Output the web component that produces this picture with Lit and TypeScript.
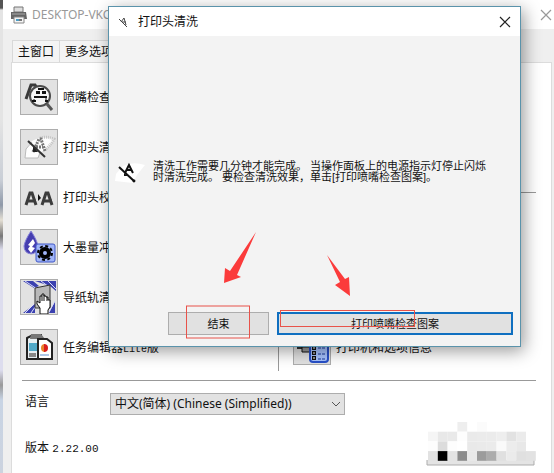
import { LitElement, html, svg, css } from "lit";
import { customElement } from "lit/decorators.js";

const nozzleCheck = svg`
  <path d="M5 19 L10 5 L14 5 L16 8" fill="none" stroke="#3a3a3a" stroke-width="3"/>
  <circle cx="19" cy="16" r="10" fill="#f4f4f4" stroke="#4a4a4a" stroke-width="2"/>
  <path d="M26 24 L31 30" stroke="#555" stroke-width="3"/>
  <path d="M17 8h6v2h-6zM15 11h4v3h-4zM21 11h4v3h-4zM13 16h13v2H13zM11 20h4v2h-4zM24 20h3v2h-3z" fill="#111"/>
  <path d="M13 19v3M25 18v4" stroke="#111"/>`;

const headClean = svg`
  <path d="M4 28 L5 19 L11 11 Q21 5 33 9 Q30 15 24 20 L18 23 L17 28 Z" fill="#fdfdfd"/>
  <path d="M4 28 L5 19 L11 12 M4 28h13l2-5" fill="none" stroke="#bbb"/>
  <path d="M19 8 Q26 6 33 9 Q31 14 25 19" fill="none" stroke="#c4c4c4" stroke-width="3" stroke-dasharray="1 1"/>
  <path d="M12 22 L18 9 L20 9 L24 21 M15 17h7" fill="none" stroke="#777" stroke-width="3" stroke-dasharray="2 1"/>
  <path d="M12 15 L17 22 L12 22Z" fill="#222"/>
  <path d="M7 11 L24 27" stroke="#333" stroke-width="2"/>`;

const headAlign = svg`
  <path d="M5 25 L9 13 H11 L15 25 M6 21h9 M21 25 L25 13 H27 L31 25 M22 21h9" fill="none" stroke="#3c3c3c" stroke-width="3"/>
  <path d="M17 14v7l3-3z" fill="#111"/>`;

const inkFlush = svg`
  <path d="M10 1 Q16 10 17 16 Q16 24 10 24 Q3 23 3 16 Q4 10 10 1Z" fill="#463eb0" stroke="#8783d8"/>
  <path d="M12 9l2 4-3 4 3 1-4 5-3-4 2-3-2-1z" fill="#fff"/>
  <rect x="15" y="14" width="19" height="18" rx="2" fill="#a0b4f8" stroke="#4058c8"/>
  <circle cx="24" cy="23" r="4" fill="none" stroke="#000" stroke-width="4"/>
  <circle cx="24" cy="23" r="7" fill="none" stroke="#000" stroke-width="2" stroke-dasharray="3 2.500"/>`;

const paperPath = svg`
  <path d="M2 1h10l6 5-5 2zM14 1h21v10l-6-5zM2 33l12-9v9zM28 33l6-12v12z" fill="#3b41b0"/>
  <path d="M4 1l12 8M20 1l8 6M27 1l8 8M4 33l9-9M10 33l4-6M28 32l6-11" stroke="#d9dcfa"/>
  <path d="M14 8 L29 5 V28 H14Z" fill="#b9b9b9" stroke="#333"/>
  <path d="M19 34v-6l-3-4v-3l3 2v-7h2v-2h2v2h2v1h2v3h2v7l-2 3v4z" fill="#fff" stroke="#111"/>
  <path d="M21 16v5M23 15v6M26 17v4" stroke="#111"/>`;

const jobEditor = svg`
  <path d="M6 8l6-3h8v24H6z" fill="#e6eef2" stroke="#222" stroke-width="2"/>
  <path d="M10 4h10l4 5H9z" fill="#777"/>
  <path d="M8 13h8v8H8z" fill="#4fa8c8"/><path d="M8 23h7v4H8z" fill="#888"/>
  <path d="M17 9h9l5 4v16H17z" fill="#fff" stroke="#222" stroke-width="2"/>
  <path d="M24 14a4 4 0 1 0 0 8z" fill="#e9842c"/><path d="M23 14a4 4 0 0 1 0 8z" fill="#d81e1e"/>
  <path d="M19 25h9" stroke="#5a8fd0"/>`;

const printerInfo = svg`
  <path d="M3 14h14v5H3z" fill="#333"/><path d="M8 17h9v5H8z" fill="#999" stroke="#111"/>
  <rect x="16" y="8" width="18" height="24" rx="3" fill="#a8c4ff" stroke="#2850c8" stroke-width="2"/>
  <path d="M18 13h4M18 18h4M18 23h4M18 28h4" stroke="#111" stroke-width="4"/>
  <path d="M19 18h2M19 23h2M19 28h2" stroke="#fff"/>
  <path d="M24 13h8M24 18h8M24 24h8M24 29h8" stroke="#1a3b9c" stroke-dasharray="3 1"/>`;

const TASKS = [
  { icon: nozzleCheck, name: "喷嘴检查", latin: "", tail: "" },
  { icon: headClean, name: "打印头清洗", latin: "", tail: "" },
  { icon: headAlign, name: "打印头校准", latin: "", tail: "" },
  { icon: inkFlush, name: "大墨量冲洗", latin: "", tail: "" },
  { icon: paperPath, name: "导纸轨清洁", latin: "", tail: "" },
  { icon: jobEditor, name: "任务编辑器", latin: "Lite", tail: "版" },
];

/* [column, row, shade] of the mosaic cells over the bottom button */
const CELLS: [number, number, string][] = [
  [3, 0, "#eeeeee"], [5, 0, "#fbfbfb"],
  [0, 1, "#f5f5f5"], [1, 1, "#e8e8e8"], [2, 1, "#e9e9e9"], [3, 1, "#fdfdfd"], [4, 1, "#eaeaea"], [5, 1, "#ebebeb"], [6, 1, "#ebebeb"], [7, 1, "#eeeeee"], [8, 1, "#e2e2e2"], [9, 1, "#ebebeb"],
  [0, 2, "#fdfdfd"], [1, 2, "#dcdcdc"], [2, 2, "#fdfdfd"], [3, 2, "#ffffff"], [4, 2, "#e9e9e9"], [5, 2, "#eaeaea"], [6, 2, "#ebebeb"], [7, 2, "#fafafa"], [8, 2, "#ececec"], [9, 2, "#e8e8e8"],
  [0, 3, "#e2e2e2"], [1, 3, "#000000"], [2, 3, "#e3e3e3"], [3, 3, "#8c8c8c"], [4, 3, "#e9e9e9"], [5, 3, "#9c9c9c"], [6, 3, "#acacac"], [7, 3, "#e0e0e0"], [8, 3, "#ebebeb"], [9, 3, "#e0e0e0"], [10, 3, "#e2e2e2"],
];

@customElement("app-root")
export class AppRoot extends LitElement {
  static styles = css`
    :host {
      display: block;
      position: relative;
      min-height: 100vh;
      overflow: hidden;
      box-sizing: border-box;
      padding-left: 3px;
      background: linear-gradient(#555 0 8px, #e4e4e4 10px 120px, #c9ced6 180px, #8f99a8 205px, #e4dfd4 220px, #777 236px, #dde 250px 370px, #999 385px, #c8d4e4 400px, #ccd3df);
      font: 12px/16px "Liberation Sans", "Noto Sans CJK SC", sans-serif;
      color: #111;
    }
    button, select { font: inherit; color: inherit; margin: 0; padding: 0; border-radius: 0; }
    svg { display: block; }
    hr { margin: 0; border: 0; border-top: 1px solid #999; }
    .window { display: flex; flex-direction: column; min-height: 100vh; background: #efefef; }
    .bar { display: flex; align-items: center; background: #fff; }
    .main-bar { height: 29px; padding: 0 2px 0 7px; gap: 4px; color: #999; font-family: "Noto Sans", sans-serif; }
    .bar-title { flex: 1; font-weight: 400; font-size: inherit; margin: 0; }
    .close { border: 0; background: none; }
    .tabs { display: flex; margin: 11px 0 0 9px; }
    .tab { height: 22px; padding: 0 5px; border: 1px solid #d9d9d9; border-bottom: 0; background: #f4f4f4; }
    .tab + .tab { border-left: 0; }
    .panel { flex: 1; margin: 0 2px 0 8px; padding: 16px 15px 6px 8px; border: 1px solid #dcdcdc; border-bottom: 0; background: #fff; }
    .columns { display: grid; grid-template-columns: 1fr 1fr; padding-bottom: 9px; }
    .list { display: flex; flex-direction: column; gap: 14px; padding-bottom: 6px; }
    .right { justify-content: space-between; border-left: 1px solid #999; padding-left: 14px; }
    .right hr { margin-top: 113px; }
    .rule { margin-left: 2px; }
    .task { display: flex; align-items: center; gap: 5px; white-space: nowrap; }
    .task > span { padding-top: 4px; }
    .tool { flex: none; width: 38px; height: 36px; border: 1px solid #adadad; background: #e2e2e2; }
    .mono { font-family: "Liberation Mono", monospace; font-size: 10px; }
    .number { font-family: "Liberation Mono", monospace; font-size: 11px; }
    .language { display: flex; margin: 12px 0 0 5px; }
    .language label { width: 85px; padding-top: 1px; }
    .pick { display: grid; width: 235px; }
    .pick > * { grid-area: 1 / 1; }
    .pick select { appearance: none; height: 22px; padding: 0 20px 0 4px; border: 1px solid #adadad; background: #e2e2e2; font-family: "Noto Sans", "Noto Sans CJK SC", sans-serif; }
    .pick svg { justify-self: end; align-self: center; margin-right: 4px; pointer-events: none; }
    .foot { display: flex; justify-content: space-between; margin-top: 7px; padding-left: 5px; }
    .version { margin: 18px 0 0; }
    .hidden-button { border: 0; background: none; }

    .dialog { position: absolute; top: 6px; left: 108px; right: 33px; display: flex; flex-direction: column; box-sizing: border-box; height: 341px; border: 1px solid #5a93ab; background: #f3f3f3; box-shadow: 3px 4px 16px rgba(0, 0, 0, 0.4); }
    .dialog-bar { height: 29px; padding: 0 9px; gap: 10px; }
    .message { flex: 1; display: flex; align-items: center; gap: 2px; padding: 0 34px 2px 6px; font-size: 11px; line-height: 11px; }
    .message p { margin: 0; padding-bottom: 3px; white-space: nowrap; }
    .actions { display: flex; gap: 8px; padding: 0 7px 11px 59px; font-size: 11px; }
    .action { height: 23px; border: 1px solid #adadad; background: #e1e1e1; }
    .finish { width: 101px; }
    .print { flex: 1; border: 2px solid #0f6fc0; }
    .marks { position: absolute; top: 220px; left: 160px; pointer-events: none; }
  `;

  private cross(color: string) {
    return html`<svg width="12" height="12" viewBox="0 0 12 12"><path d="M1 1 11 11M11 1 1 11" stroke=${color} stroke-width="1.2"/></svg>`;
  }

  private task(t: (typeof TASKS)[number]) {
    return html`<div class="task">
      <button class="tool" aria-label=${t.name}><svg width="36" height="34" viewBox="0 0 36 34">${t.icon}</svg></button>
      <span>${t.name}<span class="mono">${t.latin}</span>${t.tail}</span>
    </div>`;
  }

  render() {
    return html`
      <main class="window">
        <header class="bar main-bar">
          <svg width="18" height="18" viewBox="0 0 18 18">
            <path d="M4 1h9v5H4z" fill="#ddd" stroke="#777"/>
            <path d="M1 6h15l1 7H1z" fill="#666"/>
            <path d="M2 8h13" stroke="#aaa"/>
            <path d="M4 11h10v6H4z" fill="#f5f5f5" stroke="#888"/>
            <path d="M6 13h3v2H6z" fill="#4a9cc4"/><path d="M9 13h3v2H9z" fill="#777"/>
          </svg>
          <h1 class="bar-title">DESKTOP-VKC</h1>
          <button class="close" aria-label="关闭">${this.cross("#999")}</button>
        </header>
        <nav class="tabs">
          <button class="tab">主窗口</button>
          <button class="tab">更多选项</button>
        </nav>
        <section class="panel">
          <div class="columns">
            <div class="list">${TASKS.map((t) => this.task(t))}</div>
            <div class="list right">
              <hr>
              ${this.task({ icon: printerInfo, name: "打印机和选项信息", latin: "", tail: "" })}
            </div>
          </div>
          <hr class="rule">
          <div class="language">
            <label for="lang">语言</label>
            <div class="pick">
              <select id="lang"><option>中文(简体) (Chinese (Simplified))</option></select>
              <svg width="10" height="6" viewBox="0 0 10 6"><path d="M1 1l4 4 4-4" fill="none" stroke="#555"/></svg>
            </div>
          </div>
          <div class="foot">
            <p class="version">版本 <span class="number">2.22.00</span></p>
            <button class="hidden-button" aria-label="退出">
              <svg width="110" height="45" viewBox="0 0 110 45">
                <path d="M1 38v5h107v-5" fill="#e4e4e4" stroke="#adadad"/>
                ${CELLS.map(([c, r, shade]) => svg`<rect x=${2 + c * 9.8} y=${r * 9.7} width="9.8" height="9.7" fill=${shade}/>`)}
              </svg>
            </button>
          </div>
        </section>
      </main>

      <section class="dialog" role="dialog" aria-label="打印头清洗">
        <header class="bar dialog-bar">
          <svg width="10" height="12" viewBox="0 0 10 12">
            <path d="M1 3l8 8M3 6l3-4 2 7M4 6h4" fill="none" stroke="#444"/>
          </svg>
          <h2 class="bar-title">打印头清洗</h2>
          <button class="close" aria-label="关闭">${this.cross("#222")}</button>
        </header>
        <div class="message">
          <svg width="36" height="24" viewBox="0 0 36 24">
            <path d="M0 20 1 13 8 5Q18 0 30 4L22 14 18 22Z" fill="#fff"/>
            <path d="M4 6 19 20" stroke="#111" stroke-width="2"/>
            <path d="M10 12 14 4 18 12M11 9h6" fill="none" stroke="#111" stroke-width="2"/>
            <path d="M9 12v3h4z" fill="#111"/>
            <circle cx="19" cy="20" r="1.5" fill="#111"/>
          </svg>
          <p>清洗工作需要几分钟才能完成。 当操作面板上的电源指示灯停止闪烁<br>时清洗完成。 要检查清洗效果，单击[打印喷嘴检查图案]。</p>
        </div>
        <div class="actions">
          <button class="action finish">结束</button>
          <button class="action print">打印喷嘴检查图案</button>
        </div>
      </section>

      <svg class="marks" width="260" height="130" viewBox="0 0 260 130">
        <rect x="26.500" y="86" width="63" height="32" fill="none" stroke="#e8524a"/>
        <rect x="120.500" y="90.500" width="134" height="16" fill="none" stroke="#e8524a"/>
        <path d="M96 12 77 55 81 57 64 63 65 48 70 51Z" fill="#fb3b3b"/>
        <path d="M167 35 185 59 189 57 190 76 175 65 180 62Z" fill="#fb3b3b"/>
      </svg>
    `;
  }
}
